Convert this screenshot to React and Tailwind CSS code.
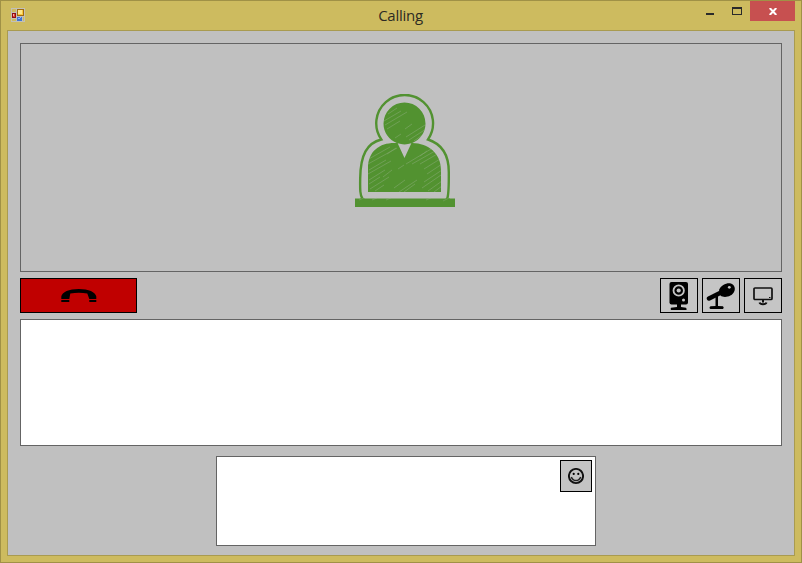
import React from "react";

function AppIcon() {
  return (
    <svg width="14" height="14" viewBox="0 0 14 14" shapeRendering="crispEdges" aria-hidden="true">
      <path fill="#c2c0b8" d="M0 0h14v1H0zM0 13h14v1H0zM0 0h1v14H0zM13 0h1v14h-1zM5 0h1v14H5zM0 4h5v1H0zM0 10h5v1H0zM6 8h8v1H6zM11 9h1v4h-1z" />
      <path fill="#a06a10" d="M6 1h7v7H6z" />
      <path fill="#fbc93c" d="M7 2h5v5H7z" />
      <path fill="#fde68c" d="M7 2h4v4H7z" />
      <path fill="#8f1016" d="M1 5h4v5H1z" />
      <path fill="#e04438" d="M2 6h2v3H2z" />
      <path fill="#f6b0a0" d="M2 6h1v2H2z" />
      <path fill="#3f74d6" d="M6 9h5v4H6z" />
      <path fill="#8fb8f5" d="M7 10h2v1H7zM9 9h1v1H9z" />
    </svg>
  );
}

function TitleBar() {
  return (
    <header className="grid h-[29px] shrink-0 grid-cols-[1fr_auto_1fr]">
      <div className="pt-[7px] pl-[10px]">
        <AppIcon />
      </div>
      <h1 className="-ml-px text-[15px] leading-[28px] tracking-[-0.25px] text-[#2d2b24]">Calling</h1>
      <div className="mr-[6px] flex justify-end">
        <button className="flex h-5 w-[26px] justify-end pt-3 pr-2" aria-label="Minimize">
          <span className="h-[2px] w-2 shrink-0 bg-[#2a2a2a]" />
        </button>
        <button className="flex h-5 w-[28px] justify-end pt-1.5 pr-2" aria-label="Maximize">
          <span className="h-2 w-[10px] border border-t-2 border-[#2a2a2a]" />
        </button>
        <button className="flex h-5 w-[45px] justify-center bg-[#c75050] pt-[7px]" aria-label="Close">
          <svg width="8" height="7" viewBox="0 0 8 7">
            <path d="M.7 0 7.3 7M7.3 0 .7 7" stroke="#fff" strokeWidth="2" />
          </svg>
        </button>
      </div>
    </header>
  );
}

function Avatar() {
  return (
    <svg width="100" height="114" viewBox="0 0 100 114" aria-hidden="true">
      <defs>
        <clipPath id="figure">
          <circle cx="49.5" cy="29.5" r="21" />
          <path d="M13 98V74C13 57 25 49 39 49h3.500L49.500 64 56.500 49C73 49 86 59 86 76v22z" />
        </clipPath>
      </defs>
      <path
        d="M7.500 105C5 101 5 96 5.200 84 5.500 61 12 49 26.300 45.500A28.400 28.400 0 1 1 73 45.500C87 50 93.800 62 93.800 78c0 16 .2 23-1.800 27"
        fill="none"
        stroke="#529231"
        strokeWidth="2.400"
      />
      <path d="M0 104.500h5l2-1 3 1h80l3-1 2 1h5v8.500H0z" fill="#529231" />
      <g clipPath="url(#figure)">
        <path d="M10 5h80v95H10z" fill="#529231" />
        <g fill="none" stroke="#a5b89a" strokeWidth=".7" opacity=".5">
          <path d="M29 27 46 17M30 31 52 18M32 35 45 27M51 43 70 31M54 46 71 35M59 47 70 39M50 35 57 30M40 44 46 40M33 20 42 14" />
          <path d="M12 66 35 53M13 70 42 54M14 76 31 66M13 80 36 67M14 86 30 76M14 90 25 83M15 95 34 83M20 97 29 91" />
          <path d="M51 70 76 55M57 70 80 57M65 70 84 59M69 75 85 65M72 80 87 70M69 88 87 76M67 94 86 81M73 97 87 87" />
          <path d="M39 94 50 86M44 98 62 86M49 98 60 90M28 83 37 76M32 60 41 54M79 98 87 92M43 75 49 71M65 62 72 57" />
        </g>
      </g>
      <path d="M4 106 9 104M17 106 22 104M31 106 36 104M71 106 76 104M88 107 94 104" stroke="#a5b89a" strokeWidth=".5" opacity=".6" />
    </svg>
  );
}

function HangUpIcon() {
  return (
    <svg width="36" height="13" viewBox="0 0 36 13" aria-hidden="true">
      <path d="M.3 10V7.500C1 3 8 0 17.800 0S34.500 3 35.300 7.500V10H28.300L26.300 4.500Q18 3.200 9.300 4.500L8.300 10z" />
      <path d="M.3 11h8v2H.3zM28.300 11h7v2h-7z" />
    </svg>
  );
}

function WebcamIcon() {
  return (
    <svg width="20" height="30" viewBox="0 0 20 30" aria-hidden="true">
      <rect x=".5" y="1" width="18.500" height="22.500" rx="2" />
      <path d="M8 23h4v3l5 .7Q18.500 29 16.500 29H3Q1 29 2 26.700L8 26z" />
      <circle cx="9.700" cy="9.500" r="5.200" fill="none" stroke="#c5c5c5" strokeWidth="1.800" />
      <circle cx="9.700" cy="9.500" r="2.100" fill="#c5c5c5" />
      <circle cx="14.500" cy="19" r="1.500" fill="#c5c5c5" />
    </svg>
  );
}

function MicrophoneIcon() {
  return (
    <svg width="30" height="28" viewBox="0 0 30 28" aria-hidden="true">
      <path d="M3 16.500 16 10" fill="none" stroke="#000" strokeWidth="4.500" strokeLinecap="round" />
      <path d="M13 8C15 3 20 .8 24 1.200 28.500 2 30 6.500 28 10 26 14.500 18 16.500 14.500 13.500z" />
      <path d="M9.500 14h2.500v10l5 .2q1.500 1.800 0 2.800H4.500q-2-1 0-2.800L9.500 24z" />
      <circle cx="23.300" cy="5.300" r="1.400" fill="#c5c5c5" />
    </svg>
  );
}

function MonitorIcon() {
  return (
    <svg width="20" height="19" viewBox="0 0 20 19" aria-hidden="true">
      <rect x="1" y="1" width="18" height="11.500" rx="1" fill="none" stroke="#111" strokeWidth="1.700" />
      <path d="M10 12v3.500" fill="none" stroke="#111" strokeWidth="2" />
      <path d="M6.500 15.500q.5 1.700 3.500 1.700t3.500-1.700" fill="none" stroke="#111" strokeWidth="2" />
      <path d="M16 10.500h1.500" stroke="#111" />
    </svg>
  );
}

function SmileyIcon() {
  return (
    <svg width="16" height="17" viewBox="0 0 16 17" aria-hidden="true">
      <circle cx="8" cy="8" r="7.100" fill="none" stroke="#111" strokeWidth="1.900" />
      <path d="M3.300 9q1.400 3.600 4.700 3.600T12.700 9" fill="none" stroke="#222" strokeWidth="1.500" />
      <circle cx="5.700" cy="5.900" r="1.100" />
      <circle cx="10.300" cy="5.900" r="1.100" />
    </svg>
  );
}

function ToolButton({ label, children }) {
  return (
    <button
      aria-label={label}
      className="flex h-[35px] w-[38px] items-center justify-center border border-black bg-[#c5c5c5]"
    >
      {children}
    </button>
  );
}

export default function App() {
  return (
    <div className="flex h-[563px] w-[802px] flex-col border border-[#a09146] bg-[#cdbb5f] font-['Open_Sans','Noto_Sans',sans-serif]">
      <TitleBar />
      <main className="mx-[6px] mb-[6px] flex flex-1 flex-col border border-[#a99b50] bg-[#c0c0c0] px-3 pt-3">
        <section className="flex h-[229px] justify-center border border-[#646464] pt-[50px] pl-[8px]">
          <Avatar />
        </section>
        <div className="mt-[6px] flex h-[35px] justify-between">
          <button
            aria-label="Hang up"
            className="flex w-[117px] items-center justify-center border border-black bg-[#c00000]"
          >
            <HangUpIcon />
          </button>
          <div className="flex gap-1">
            <ToolButton label="Camera">
              <WebcamIcon />
            </ToolButton>
            <ToolButton label="Microphone">
              <MicrophoneIcon />
            </ToolButton>
            <ToolButton label="Share screen">
              <div className="mt-0.5">
                <MonitorIcon />
              </div>
            </ToolButton>
          </div>
        </div>
        <section className="mt-[6px] h-[127px] border border-[#646464] bg-white" />
        <section className="mt-[10px] ml-[196px] flex h-[90px] w-[380px] justify-end border border-[#646464] bg-white p-[3px]">
          <button
            aria-label="Emoticons"
            className="flex size-8 items-center justify-center border border-black bg-[#c4c4c4]"
          >
            <SmileyIcon />
          </button>
        </section>
      </main>
    </div>
  );
}
